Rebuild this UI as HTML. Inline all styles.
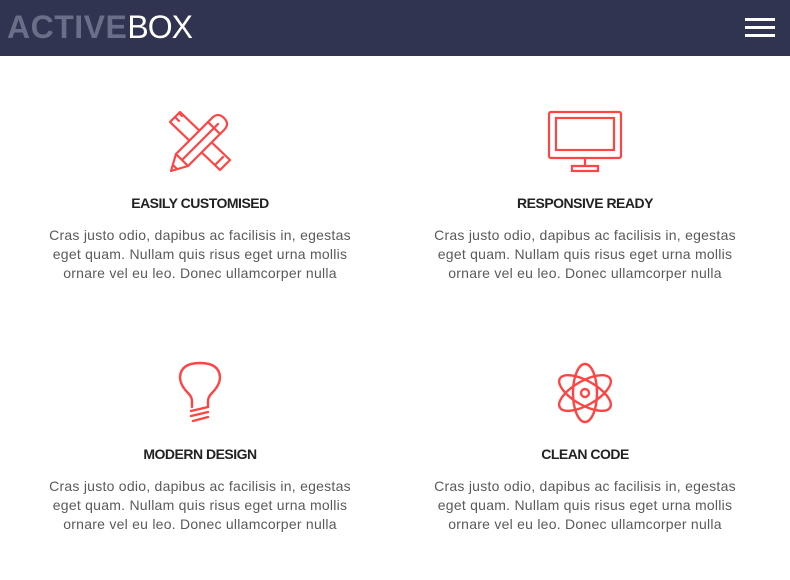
<!DOCTYPE html>
<html><head><style>
body{margin:0;width:790px;height:580px;background:#fff;font-family:"Liberation Sans",sans-serif;overflow:hidden;position:relative}
.hdr{position:absolute;left:0;top:0;width:790px;height:56px;background:#303450}
.logo{position:absolute;left:7px;top:10px;font-size:32px;line-height:34px;white-space:nowrap}
.logo b{color:#6a6e86;font-weight:900;letter-spacing:0.5px}
.logo span{color:#fff;font-weight:300;letter-spacing:-1px}
.hb{position:absolute;left:745px;width:30px;height:3px;background:#fff}
.f{position:absolute;width:340px;text-align:center}
.f svg{display:block;margin:0 auto;overflow:visible}
.f h3{margin:0;position:absolute;left:0;width:340px;top:85px;font-size:14px;color:#222;font-weight:bold;letter-spacing:-0.5px}
.f p{margin:0;position:absolute;left:10px;width:320px;top:116px;font-size:14px;line-height:19px;color:#5a5a5a;letter-spacing:0.25px}
</style></head><body>
<div class="hdr">
<div class="logo"><b>ACTIVE</b><span>BOX</span></div>
<div class="hb" style="top:18px"></div><div class="hb" style="top:26px"></div><div class="hb" style="top:34px"></div>
</div>

<div class="f" style="left:30px;top:110px">
<svg width="64" height="64" viewBox="0 0 64 64" fill="none" stroke="#f44" stroke-width="2.2" stroke-linejoin="round" stroke-linecap="round">
<path d="M2 12 L12 2 L62 50 L52 60 Z"/>
<path d="M7 7 l4 4 M11 3 l3 3 M47 55 l4 -4 M52 50 l3 -3"/>
<path d="M3 61 L8 44 L44 8 Q50 2 56 8 Q62 14 56 20 L20 56 Z" fill="#fff"/>
<path d="M8 44 L20 56 M14 50 L50 14 M40 12 L52 24 M5 55 L9 59"/>
</svg>
<h3>EASILY CUSTOMISED</h3>
<p>Cras justo odio, dapibus ac facilisis in, egestas eget quam. Nullam quis risus eget urna mollis ornare vel eu leo. Donec ullamcorper nulla</p>
</div>

<div class="f" style="left:415px;top:110px">
<svg width="76" height="64" viewBox="0 0 76 64" fill="none" stroke="#f44" stroke-width="2.2">
<rect x="2" y="2" width="72" height="46" rx="2"/>
<rect x="9" y="8" width="58" height="32"/>
<path d="M38 48 V55 M25 56 H51 V61 H25 Z"/>
</svg>
<h3>RESPONSIVE READY</h3>
<p>Cras justo odio, dapibus ac facilisis in, egestas eget quam. Nullam quis risus eget urna mollis ornare vel eu leo. Donec ullamcorper nulla</p>
</div>

<div class="f" style="left:30px;top:361px">
<svg width="64" height="64" viewBox="0 0 64 64" fill="none" stroke="#f44" stroke-width="2.4" stroke-linecap="round">
<path d="M24 46 V40 Q24 36 20 32 Q12 24 12 16 Q13 2 32 2 Q51 2 52 16 Q52 24 44 32 Q40 36 40 40 V46"/>
<path d="M23 50 L40 46 M23 55 L40 51 M25 60 L40 56"/>
</svg>
<h3>MODERN DESIGN</h3>
<p>Cras justo odio, dapibus ac facilisis in, egestas eget quam. Nullam quis risus eget urna mollis ornare vel eu leo. Donec ullamcorper nulla</p>
</div>

<div class="f" style="left:415px;top:361px">
<svg width="64" height="64" viewBox="0 0 64 64" fill="none" stroke="#f44" stroke-width="2.4">
<ellipse cx="32" cy="32" rx="12" ry="29"/>
<ellipse cx="32" cy="32" rx="12" ry="29" transform="rotate(60 32 32)"/>
<ellipse cx="32" cy="32" rx="12" ry="29" transform="rotate(-60 32 32)"/>
<circle cx="32" cy="32" r="4"/>
</svg>
<h3>CLEAN CODE</h3>
<p>Cras justo odio, dapibus ac facilisis in, egestas eget quam. Nullam quis risus eget urna mollis ornare vel eu leo. Donec ullamcorper nulla</p>
</div>
</body></html>
